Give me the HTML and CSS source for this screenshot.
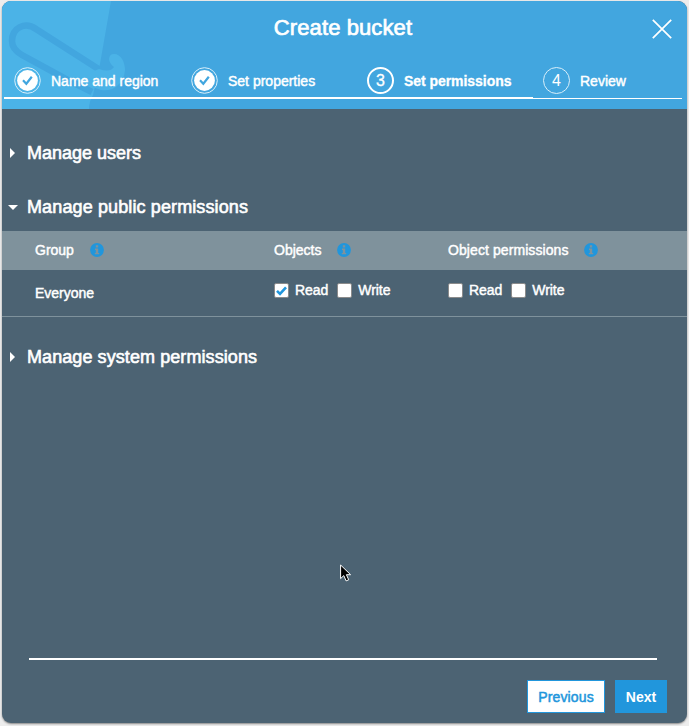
FILE: index.html
```html
<!DOCTYPE html>
<html lang="en">
<head>
<meta charset="utf-8">
<title>Create bucket</title>
<link rel="stylesheet" href="styles.css">
</head>
<body>
<svg class="defs" aria-hidden="true">
  <symbol id="done" viewBox="0 0 27 27"><circle cx="13.5" cy="13.5" r="12.8" fill="none" stroke="#d9effa" stroke-width="1"/><circle cx="13.5" cy="13.5" r="10.4" fill="#fff"/><path d="M9 13.3l3.3 3.5 5.5-7" fill="none" stroke="#42a6df" stroke-width="2.2"/></symbol>
  <symbol id="info" viewBox="0 0 14 14"><circle cx="7" cy="7" r="6.9" fill="#2196dc"/><path d="M5.8 2.3h2.4v2.1H5.8zM5 5.6h3.2v4.3H9.2v1.4H4.8V9.9h1V6.9H5z" fill="#7f929c"/></symbol>
</svg>
<main class="dialog">
  <header class="header">
    <svg class="art" width="130" height="108" viewBox="0 0 130 108" aria-hidden="true">
      <path d="M0 0H109L98 63 91 94Q87 101 87 108H0z" fill="#4bb3e7"/>
      <path d="M98 69L34 28C23 20 10 27 10 40C10 46 13 50 20 54L66 79 90 91" fill="none" stroke="#42a6df" stroke-width="6.5"/>
      <path d="M97 68Q108 72 112 66C105 61 106 53 112 53C119 53 123 61 123 69C122 83 111 91 99 89C92 87 86 83 80 78L92 70z" fill="#4bb3e7"/>
    </svg>
    <h1 class="title">Create bucket</h1>
    <button class="close" aria-label="Close"><svg width="20" height="20" viewBox="0 0 20 20"><path d="M.8.8l18.4 18.4M19.2.8L.8 19.2" stroke="#fff" stroke-width="1.7"/></svg></button>
    <ol class="steps">
      <li class="step"><svg class="mark"><use href="#done"/></svg><span>Name and region</span></li>
      <li class="step"><svg class="mark"><use href="#done"/></svg><span>Set properties</span></li>
      <li class="step active"><span class="number">3</span><span>Set permissions</span></li>
      <li class="step pending"><span class="number">4</span><span>Review</span></li>
    </ol>
    <div class="progress"><span class="complete"></span><span class="remaining"></span></div>
  </header>
  <section class="content">
    <h2 class="section users"><span class="arrow"></span>Manage users</h2>
    <h2 class="section public"><span class="arrow open"></span>Manage public permissions</h2>
    <div class="row heading">
      <div class="cell">Group<svg class="info"><use href="#info"/></svg></div>
      <div class="cell">Objects<svg class="info"><use href="#info"/></svg></div>
      <div class="cell wide">Object permissions<svg class="info"><use href="#info"/></svg></div>
    </div>
    <div class="row values">
      <div class="everyone">Everyone</div>
      <div class="checks">
        <label><span class="box"><svg width="13" height="13" viewBox="0 0 13 13"><path d="M2 6.8l3 3L11 3.3" fill="none" stroke="#2196dc" stroke-width="2.6"/></svg></span>Read</label>
        <label><span class="box"></span>Write</label>
      </div>
      <div class="checks">
        <label><span class="box"></span>Read</label>
        <label><span class="box"></span>Write</label>
      </div>
    </div>
    <h2 class="section system"><span class="arrow"></span>Manage system permissions</h2>
  </section>
  <footer class="footer"><button class="btn previous">Previous</button><button class="btn next">Next</button></footer>
  <svg class="pointer" width="12" height="19" viewBox="0 0 12 19" aria-hidden="true"><path d="M.6 1v13.6l3.2-3 2.3 5.3 2.6-1.1-2.3-5.1h4.2z" fill="#000" stroke="#fff" stroke-width="1"/></svg>
</main>
</body>
</html>
```
FILE: styles.css
```css
* { box-sizing: border-box; }
body { margin: 0; padding: 1px 2px 3px; height: 726px; background: #ededed; font: 14px/20px "Liberation Sans", Arial, sans-serif; color: #fff; -webkit-text-stroke: .45px; overflow: hidden; }
.defs { position: absolute; width: 0; height: 0; }
.dialog { position: relative; width: 685px; height: 722px; border-radius: 9px; overflow: hidden; background: #4c6373; box-shadow: 0 1px 2px #888; display: flex; flex-direction: column; }
.header { position: relative; height: 108px; background: #42a6df; flex: none; }
.art { position: absolute; left: 0; top: 0; }
.title { position: relative; margin: 0; padding: 13px 3px 0 0; height: 66px; font-size: 22px; line-height: 28px; font-weight: 400; letter-spacing: .1px; text-align: center; -webkit-text-stroke: .7px; }
.close { position: absolute; right: 15px; top: 18px; width: 20px; height: 20px; padding: 0; border: 0; background: none; }
.close svg { display: block; }
.steps { position: relative; display: grid; grid-template-columns: 177px 176px 176px 1fr; margin: 0; padding: 0 0 0 12px; list-style: none; height: 30px; }
.step { display: flex; align-items: flex-start; line-height: 28px; }
.mark, .number { width: 27px; height: 27px; margin-right: 10px; flex: none; }
.number { border: 2px solid #fff; border-radius: 50%; text-align: center; font-size: 16px; line-height: 24px; font-weight: 400; }
.active { font-weight: 700; letter-spacing: -.05px; -webkit-text-stroke: .3px; }
.pending .number { border: 1px solid #d9effa; line-height: 26px; -webkit-text-stroke: 0; }
.progress { position: relative; display: flex; align-items: flex-end; height: 2px; margin: 0 5px 0 2px; }
.complete { width: 529px; height: 2px; background: #fff; }
.remaining { flex: 1; height: 1px; background: #fff; }
.content { flex: 1; padding-top: 32px; }
.section { display: flex; align-items: center; margin: 0; padding-left: 7px; font-size: 18px; line-height: 24px; font-weight: 400; letter-spacing: .08px; -webkit-text-stroke: .6px; }
.users { letter-spacing: 0; }
.public { letter-spacing: .12px; }
.arrow { width: 18px; height: 10px; flex: none; }
.arrow::before { content: ""; display: block; width: 5px; height: 10px; margin-left: 1px; background: #fff; clip-path: polygon(0 0, 100% 50%, 0 100%); }
.arrow.open::before { width: 10px; height: 5px; margin: 3px 0 0 -1px; clip-path: polygon(0 0, 100% 0, 50% 100%); }
.public { margin-top: 30px; margin-bottom: 12px; }
.row { display: grid; grid-template-columns: 239px 174px 1fr; padding-left: 33px; }
.heading { height: 39px; padding-bottom: 1px; background: #7f929c; align-items: center; }
.cell { display: flex; align-items: center; }
.wide { letter-spacing: .08px; }
.info { width: 14px; height: 14px; margin-left: 16px; }
.values { height: 47px; border-bottom: 1px solid #7f929c; }
.everyone { padding-top: 13px; }
.checks { display: flex; gap: 9px; padding-top: 10px; height: 30px; }
.checks label { display: flex; align-items: center; letter-spacing: -.05px; }
.box { width: 15px; height: 15px; margin-right: 6px; border: 1px solid #8b8b8b; border-radius: 2px; background: #fff; }
.box svg { display: block; }
.system { margin-top: 28px; }
.footer { display: flex; justify-content: flex-end; gap: 10px; height: 65px; margin: 0 20px 0 27px; padding-top: 20px; background: linear-gradient(#fff, #fff) 0 0 / 628px 2px no-repeat; }
.footer { padding-top: 22px; }
.btn { height: 33px; border: 1px solid #2196dc; padding: 0; font: inherit; -webkit-text-stroke: .5px; }
.previous { width: 78px; background: #fff; color: #2196dc; letter-spacing: .15px; }
.next { width: 52px; background: #2196dc; color: #fff; font-weight: 700; -webkit-text-stroke: 0; }
.pointer { position: absolute; left: 338px; top: 563px; }
```
